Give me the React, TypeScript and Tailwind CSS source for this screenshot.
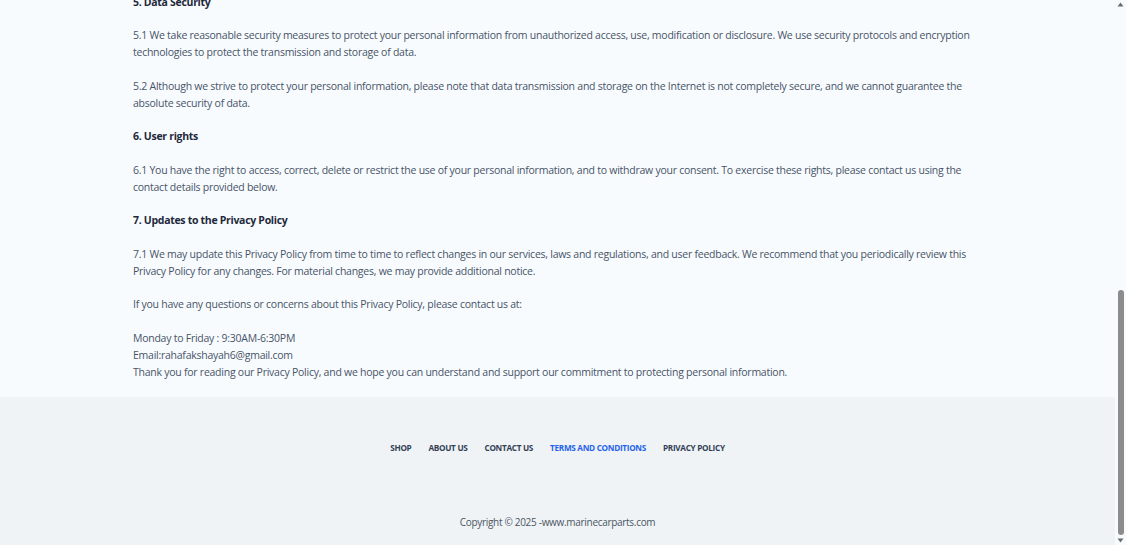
import React from "react";

const sections = [
  {
    title: "5. Data Security",
    paras: [
      "5.1 We take reasonable security measures to protect your personal information from unauthorized access, use, modification or disclosure. We use security protocols and encryption technologies to protect the transmission and storage of data.",
      "5.2 Although we strive to protect your personal information, please note that data transmission and storage on the Internet is not completely secure, and we cannot guarantee the absolute security of data.",
    ],
  },
  {
    title: "6. User rights",
    paras: [
      "6.1 You have the right to access, correct, delete or restrict the use of your personal information, and to withdraw your consent. To exercise these rights, please contact us using the contact details provided below.",
    ],
  },
  {
    title: "7. Updates to the Privacy Policy",
    paras: [
      "7.1 We may update this Privacy Policy from time to time to reflect changes in our services, laws and regulations, and user feedback. We recommend that you periodically review this Privacy Policy for any changes. For material changes, we may provide additional notice.",
      "If you have any questions or concerns about this Privacy Policy, please contact us at:",
    ],
  },
];

const links = ["Shop", "About Us", "Contact Us", "Terms and Conditions", "Privacy Policy"];

function Scrollbar() {
  return (
    <div className="w-[11px] shrink-0 flex flex-col items-center justify-between bg-[#f8fbfe] py-[2px]">
      <svg width="7" height="5" viewBox="0 0 7 5">
        <path d="M3.5 0.5 L6.5 4.5 L0.5 4.5 Z" fill="#6b6b6b" />
      </svg>
      <div className="flex-1 w-full flex flex-col justify-end pb-[3px] pt-[3px]">
        <div className="mx-auto w-[6px] h-[245px] rounded-full bg-[#8c8c8c]" />
      </div>
      <svg width="7" height="5" viewBox="0 0 7 5">
        <path d="M0.5 0.5 L6.5 0.5 L3.5 4.5 Z" fill="#6b6b6b" />
      </svg>
    </div>
  );
}

export default function App() {
  return (
    <div
      className="h-[545px] w-full overflow-hidden flex"
      style={{ fontFamily: '"Open Sans", "Noto Sans", sans-serif' }}
    >
      <div className="flex-1 flex flex-col">
        <main className="bg-[#f8fbfe] pb-[16px]">
          <div className="mx-auto max-w-[849px] -mt-[6.5px] text-[10.5px] tracking-[-0.25px] leading-[17px] text-[#475467]">
            {sections.map((s) => (
              <div key={s.title}>
                <h2 className="font-bold text-[10.5px] tracking-[-0.3px] text-[#1e293b] mb-[16.5px]">{s.title}</h2>
                {s.paras.map((p) => (
                  <p key={p} className="mb-[16.5px]">
                    {p}
                  </p>
                ))}
              </div>
            ))}
            <p>Monday to Friday : 9:30AM-6:30PM</p>
            <p>Email:rahafakshayah6@gmail.com</p>
            <p>
              Thank you for reading our Privacy Policy, and we hope you can understand and support our
              commitment to protecting personal information.
            </p>
          </div>
        </main>
        <footer className="flex-1 bg-[#eff3f6] flex flex-col items-center">
          <nav className="mt-[45px] flex items-center gap-[17px] text-[8.2px] tracking-[-0.3px] leading-[12px] font-bold uppercase">
            {links.map((l) => (
              <a
                key={l}
                href="#"
                className={l === "Terms and Conditions" ? "text-[#2563eb]" : "text-[#334155]"}
              >
                {l}
              </a>
            ))}
          </nav>
          <p className="mt-auto mb-[16px] text-[10px] tracking-[-0.3px] leading-[14px] text-[#4b5563]">
            Copyright © 2025 -www.marinecarparts.com
          </p>
        </footer>
      </div>
      <Scrollbar />
    </div>
  );
}
